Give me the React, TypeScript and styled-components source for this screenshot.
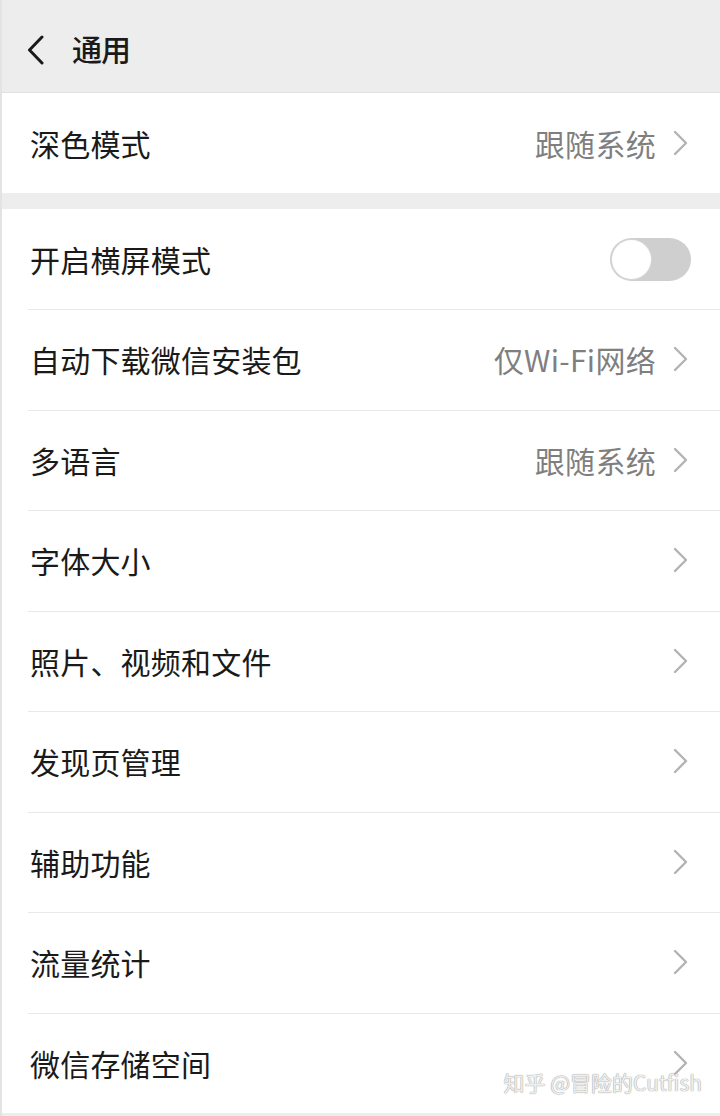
import React from "react"
import styled, { createGlobalStyle } from "styled-components"

const GlobalStyle = createGlobalStyle`
  html, body {
    margin: 0;
    padding: 0;
    background: #ededed;
    font-family: "Noto Sans CJK SC", "Noto Sans", sans-serif;
  }
`

type Item = {
  label: string
  value?: string
  toggle?: boolean
}

const items: Item[] = [
  { label: "开启横屏模式", toggle: true },
  { label: "自动下载微信安装包", value: "仅Wi-Fi网络" },
  { label: "多语言", value: "跟随系统" },
  { label: "字体大小" },
  { label: "照片、视频和文件" },
  { label: "发现页管理" },
  { label: "辅助功能" },
  { label: "流量统计" },
  { label: "微信存储空间" },
]

const Chevron = ({ color = "#b3b3b3" }: { color?: string }) => (
  <svg width="18" height="26" viewBox="0 0 18 26">
    <path d="M3 2 L14 13 L3 24" fill="none" stroke={color} strokeWidth="2.4" strokeLinecap="round" strokeLinejoin="round" />
  </svg>
)

function App() {
  return (
    <Page>
      <GlobalStyle />
      <Header>
        <BackBtn>
          <svg width="20" height="30" viewBox="0 0 20 30">
            <path d="M16 2 L3.5 15 L16 28" fill="none" stroke="#1a1a1a" strokeWidth="3" strokeLinecap="round" strokeLinejoin="round" />
          </svg>
        </BackBtn>
        <Title>通用</Title>
      </Header>

      <Group>
        <Row>
          <Label>深色模式</Label>
          <Value>跟随系统</Value>
          <Chevron />
        </Row>
      </Group>

      <Group spaced>
        {items.map((item, i) => (
          <Row key={item.label} divided={i > 0}>
            <Label>{item.label}</Label>
            {item.toggle ? (
              <Switch>
                <Knob />
              </Switch>
            ) : (
              <>
                {item.value && <Value>{item.value}</Value>}
                <Chevron />
              </>
            )}
          </Row>
        ))}
      </Group>

      <Watermark>知乎 @冒险的Cutfish</Watermark>
    </Page>
  )
}

const Page = styled.div`
  position: relative;
  width: 720px;
  height: 1116px;
  overflow: hidden;
  background: #ededed;
  border-left: 2px solid #e3e3e3;
  box-sizing: border-box;
`

const Header = styled.div`
  height: 92px;
  display: flex;
  align-items: center;
  padding-left: 24px;
  border-bottom: 1px solid #e2e2e2;
  background: #ededed;
`

const BackBtn = styled.div`
  display: flex;
  align-items: center;
  width: 46px;
  margin-top: 8px;
`

const Title = styled.div`
  font-size: 30px;
  font-weight: 500;
  color: #1a1a1a;
  letter-spacing: -1px;
  margin-top: 4px;
`

const Group = styled.div<{ spaced?: boolean }>`
  background: #fff;
  margin-top: ${({ spaced }) => (spaced ? "16px" : "0")};
`

const Row = styled.div<{ divided?: boolean }>`
  height: ${({ divided }) => (divided ? "100.5px" : "100px")};
  display: flex;
  align-items: center;
  padding: 0 30px 0 28px;
  position: relative;
  box-sizing: border-box;
  ${({ divided }) =>
    divided &&
    `
    &::before {
      content: "";
      position: absolute;
      top: 0;
      left: 26px;
      right: 0;
      height: 1px;
      background: #e8e8e8;
    }
  `}
`

const Label = styled.div`
  flex: 1;
  font-size: 30px;
  color: #1a1a1a;
  letter-spacing: 0.2px;
`

const Value = styled.div`
  font-size: 30px;
  color: #7f7f7f;
  margin-right: 16px;
  letter-spacing: 0.3px;
`

const Switch = styled.div`
  width: 81px;
  height: 43px;
  border-radius: 22px;
  background: #cfcfcf;
  display: flex;
  align-items: center;
  padding: 0 2px;
  box-sizing: border-box;
  margin-right: -1px;
`

const Knob = styled.div`
  width: 39px;
  height: 39px;
  border-radius: 50%;
  background: #fff;
  box-shadow: 0 0 0 1px #d6d6d6;
`

const Watermark = styled.div`
  position: absolute;
  right: 18px;
  bottom: 19px;
  font-size: 21px;
  color: rgba(255, 255, 255, 0.85);
  text-shadow: 0 0 1px #9a9a9a, 0 0 1px #9a9a9a;
  font-family: "Noto Sans CJK SC", "Noto Sans", sans-serif;
`

export default App
